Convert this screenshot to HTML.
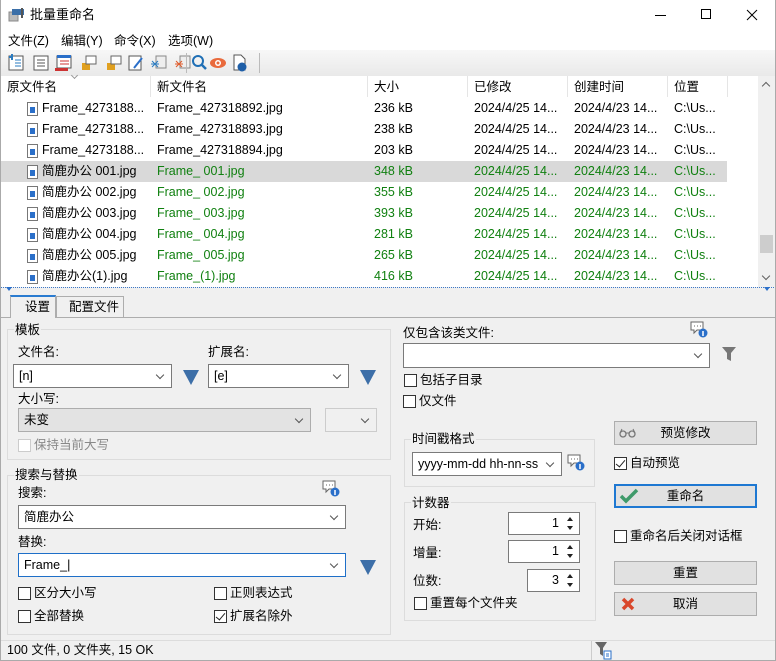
<!DOCTYPE html>
<html><head><meta charset="utf-8"><style>
*{box-sizing:border-box;margin:0;padding:0}
body{width:776px;height:661px;overflow:hidden;background:#f0f0f0;font-family:"Liberation Sans","Noto Sans CJK SC",sans-serif;font-size:12.5px;color:#000;position:relative}
.a{position:absolute;white-space:nowrap}
.t{position:absolute;white-space:nowrap;line-height:16px}
.combo{position:absolute;background:#fff;border:1px solid #7a7a7a;height:24px;padding:0 5px;line-height:22px}
.combo:after{content:"";position:absolute;right:8px;top:7px;width:5px;height:5px;border-right:1px solid #555;border-bottom:1px solid #555;transform:rotate(45deg)}
.tri{position:absolute;width:0;height:0;border-left:8px solid transparent;border-right:8px solid transparent;border-top:15px solid #3d6fa8}
.cb{position:absolute;width:13px;height:13px;border:1px solid #333;background:#fff}
.cb.chk:after{content:"";position:absolute;left:3px;top:0px;width:4px;height:8px;border-right:1.5px solid #222;border-bottom:1.5px solid #222;transform:rotate(40deg)}
.grp{position:absolute;border:1px solid #dcdcdc}
.btn{position:absolute;background:#e1e1e1;border:1px solid #adadad;height:24px;text-align:center;line-height:22px}
.spin{position:absolute;background:#fff;border:1px solid #7a7a7a;height:23px;text-align:right;padding-right:20px;line-height:21px}
.spin:before{content:"";position:absolute;right:6px;top:4px;border-left:3px solid transparent;border-right:3px solid transparent;border-bottom:4px solid #222}
.spin:after{content:"";position:absolute;right:6px;bottom:4px;border-left:3px solid transparent;border-right:3px solid transparent;border-top:4px solid #222}
.row{position:absolute;left:0;width:727px;height:21px;line-height:21px}
.row span{position:absolute;white-space:nowrap}
.g{color:#108010}
.fi{position:absolute;left:27px;top:4px;width:11px;height:14px;border:1px solid #777;background:#fff}
.fi:after{content:"";position:absolute;left:2px;top:4px;width:5px;height:6px;background:#2a6fc9}
.info{position:absolute;width:18px;height:18px}
</style></head><body>
<!-- title -->
<div class="a" style="left:0;top:0;width:776px;height:50px;background:#fff"></div>
<svg class="a" style="left:8px;top:8px" width="18" height="14"><rect x="1" y="4" width="9" height="9" fill="#bbb" stroke="#888"/><rect x="4" y="1" width="12" height="6" fill="#3b6fa8"/><rect x="13" y="0" width="2" height="10" fill="#555"/></svg>
<div class="t" style="left:30px;top:7px;font-size:13px">批量重命名</div>
<div class="a" style="left:655px;top:15px;width:11px;height:1px;background:#000"></div>
<div class="a" style="left:701px;top:9px;width:10px;height:10px;border:1px solid #000"></div>
<svg class="a" style="left:746px;top:9px" width="12" height="12"><path d="M1 1L11 11M11 1L1 11" stroke="#000" stroke-width="1"/></svg>
<!-- menu -->
<div class="t" style="left:8px;top:33px">文件(Z)</div>
<div class="t" style="left:61px;top:33px">编辑(Y)</div>
<div class="t" style="left:114px;top:33px">命令(X)</div>
<div class="t" style="left:168px;top:33px">选项(W)</div>
<!-- toolbar -->
<div class="a" style="left:0;top:50px;width:776px;height:26px;background:linear-gradient(#f7f7f7,#e9e9e9)"></div>
<svg class="a" style="left:6px;top:53px" width="260" height="20">
<g fill="none" stroke="#555"><rect x="3" y="3" width="14" height="14" fill="#fff"/><rect x="28" y="3" width="14" height="14" fill="#fff"/><rect x="51" y="3" width="14" height="12" fill="#fff"/></g>
<path d="M3 4h4M6 1v6" stroke="#2a7bc0" stroke-width="2"/><path d="M9 7h6M9 10h6M9 13h6" stroke="#2a7bc0"/>
<path d="M31 7h8M31 10h8M31 13h8" stroke="#555"/>
<rect x="51" y="2" width="14" height="3" fill="#2a6fc9"/><path d="M54 8h9M54 11h9" stroke="#c33"/><rect x="49" y="15" width="13" height="3" fill="#c33"/>
<rect x="76" y="10" width="8" height="7" fill="#e0a020"/><rect x="80" y="3" width="10" height="8" fill="#fff" stroke="#666"/>
<rect x="101" y="10" width="8" height="7" fill="#e0a020"/><rect x="105" y="3" width="10" height="8" fill="#fff" stroke="#666"/>
<rect x="123" y="3" width="12" height="14" fill="#fff" stroke="#555"/><path d="M128 15l8-10" stroke="#2a6fc9" stroke-width="2"/>
<rect x="150" y="3" width="10" height="12" fill="#eee" stroke="#888"/><path d="M146 14l6-6M146 8l6 6M145 11h8" stroke="#2a7bc0"/>
<rect x="174" y="3" width="10" height="12" fill="#eee" stroke="#888"/><path d="M170 14l6-6M170 8l6 6M169 11h8" stroke="#e05a2a"/>
<path d="M180.5 0v20" stroke="#bbb"/>
<circle cx="192" cy="8" r="5" fill="none" stroke="#1f6fb5" stroke-width="2"/><path d="M196 12l4 4" stroke="#1f6fb5" stroke-width="2.5"/>
<ellipse cx="212" cy="10" rx="8" ry="5" fill="#e96a3c"/><circle cx="212" cy="10" r="3" fill="#fff"/><circle cx="212" cy="10" r="1.5" fill="#e96a3c"/>
<path d="M228 2h7l4 4v11h-11z" fill="#fff" stroke="#555"/><circle cx="236" cy="14" r="4.5" fill="#1f5fa8"/>
<path d="M253.5 0v20" stroke="#bbb"/>
</svg>
<!-- list -->
<div class="a" style="left:0;top:76px;width:776px;height:211px;background:#fff"></div>
<div class="t" style="left:7px;top:79px">原文件名</div>
<div class="t" style="left:157px;top:79px">新文件名</div>
<div class="t" style="left:374px;top:79px">大小</div>
<div class="t" style="left:474px;top:79px">已修改</div>
<div class="t" style="left:574px;top:79px">创建时间</div>
<div class="t" style="left:674px;top:79px">位置</div>
<div class="a" style="left:150px;top:76px;width:1px;height:21px;background:#e5e5e5"></div>
<div class="a" style="left:367px;top:76px;width:1px;height:21px;background:#e5e5e5"></div>
<div class="a" style="left:467px;top:76px;width:1px;height:21px;background:#e5e5e5"></div>
<div class="a" style="left:567px;top:76px;width:1px;height:21px;background:#e5e5e5"></div>
<div class="a" style="left:667px;top:76px;width:1px;height:21px;background:#e5e5e5"></div>
<div class="a" style="left:727px;top:76px;width:1px;height:21px;background:#e5e5e5"></div>
<div class="a" style="left:72px;top:73px;width:5px;height:5px;border-right:1px solid #999;border-bottom:1px solid #999;transform:rotate(45deg)"></div>

<div class="row" style="top:98px"><i class="fi"></i><span style="left:42px">Frame_4273188...</span><span style="left:157px">Frame_427318892.jpg</span><span style="left:374px">236 kB</span><span style="left:474px">2024/4/25 14...</span><span style="left:574px">2024/4/23 14...</span><span style="left:674px">C:\Us...</span></div>
<div class="row" style="top:119px"><i class="fi"></i><span style="left:42px">Frame_4273188...</span><span style="left:157px">Frame_427318893.jpg</span><span style="left:374px">238 kB</span><span style="left:474px">2024/4/25 14...</span><span style="left:574px">2024/4/23 14...</span><span style="left:674px">C:\Us...</span></div>
<div class="row" style="top:140px"><i class="fi"></i><span style="left:42px">Frame_4273188...</span><span style="left:157px">Frame_427318894.jpg</span><span style="left:374px">203 kB</span><span style="left:474px">2024/4/25 14...</span><span style="left:574px">2024/4/23 14...</span><span style="left:674px">C:\Us...</span></div>
<div class="row" style="top:161px;background:#d9d9d9"><i class="fi"></i><span style="left:42px">简鹿办公 001.jpg</span><span class="g" style="left:157px">Frame_ 001.jpg</span><span class="g" style="left:374px">348 kB</span><span class="g" style="left:474px">2024/4/25 14...</span><span class="g" style="left:574px">2024/4/23 14...</span><span class="g" style="left:674px">C:\Us...</span></div>
<div class="row" style="top:182px"><i class="fi"></i><span style="left:42px">简鹿办公 002.jpg</span><span class="g" style="left:157px">Frame_ 002.jpg</span><span class="g" style="left:374px">355 kB</span><span class="g" style="left:474px">2024/4/25 14...</span><span class="g" style="left:574px">2024/4/23 14...</span><span class="g" style="left:674px">C:\Us...</span></div>
<div class="row" style="top:203px"><i class="fi"></i><span style="left:42px">简鹿办公 003.jpg</span><span class="g" style="left:157px">Frame_ 003.jpg</span><span class="g" style="left:374px">393 kB</span><span class="g" style="left:474px">2024/4/25 14...</span><span class="g" style="left:574px">2024/4/23 14...</span><span class="g" style="left:674px">C:\Us...</span></div>
<div class="row" style="top:224px"><i class="fi"></i><span style="left:42px">简鹿办公 004.jpg</span><span class="g" style="left:157px">Frame_ 004.jpg</span><span class="g" style="left:374px">281 kB</span><span class="g" style="left:474px">2024/4/25 14...</span><span class="g" style="left:574px">2024/4/23 14...</span><span class="g" style="left:674px">C:\Us...</span></div>
<div class="row" style="top:245px"><i class="fi"></i><span style="left:42px">简鹿办公 005.jpg</span><span class="g" style="left:157px">Frame_ 005.jpg</span><span class="g" style="left:374px">265 kB</span><span class="g" style="left:474px">2024/4/25 14...</span><span class="g" style="left:574px">2024/4/23 14...</span><span class="g" style="left:674px">C:\Us...</span></div>
<div class="row" style="top:266px"><i class="fi"></i><span style="left:42px">简鹿办公(1).jpg</span><span class="g" style="left:157px">Frame_(1).jpg</span><span class="g" style="left:374px">416 kB</span><span class="g" style="left:474px">2024/4/25 14...</span><span class="g" style="left:574px">2024/4/23 14...</span><span class="g" style="left:674px">C:\Us...</span></div>
<!-- scrollbar -->
<div class="a" style="left:758px;top:76px;width:17px;height:211px;background:#f0f0f0"></div>
<div class="a" style="left:760px;top:235px;width:13px;height:18px;background:#cdcdcd"></div>
<div class="a" style="left:763px;top:83px;width:6px;height:6px;border-left:1.5px solid #606060;border-top:1.5px solid #606060;transform:rotate(45deg)"></div>
<div class="a" style="left:763px;top:273px;width:6px;height:6px;border-right:1.5px solid #606060;border-bottom:1.5px solid #606060;transform:rotate(45deg)"></div>
<div class="a" style="left:0;top:287px;width:776px;height:3px;border-top:1px dotted #3c78c8;background:#f0f0f0"></div>
<div class="a" style="left:6px;top:287px;border-left:3px solid transparent;border-right:3px solid transparent;border-top:4px solid #2a6fc9"></div>
<div class="a" style="left:764px;top:287px;border-left:3px solid transparent;border-right:3px solid transparent;border-top:4px solid #2a6fc9"></div>
<!-- tabs -->
<div class="a" style="left:0;top:317px;width:776px;height:1px;background:#adadad"></div>
<div class="a" style="left:10px;top:295px;width:46px;height:23px;background:#f0f0f0;border:1px solid #adadad;border-bottom:none;border-top:2px solid #2a7bd0"></div>
<div class="t" style="left:25px;top:299px">设置</div>
<div class="a" style="left:56px;top:296px;width:68px;height:21px;border:1px solid #adadad;border-bottom:none;background:#f0f0f0"></div>
<div class="t" style="left:69px;top:299px">配置文件</div>
<!-- 模板 -->
<div class="grp" style="left:7px;top:329px;width:384px;height:131px"></div>
<div class="t" style="left:14px;top:322px;background:#f0f0f0;padding:0 1px">模板</div>
<div class="t" style="left:18px;top:344px">文件名:</div>
<div class="combo" style="left:13px;top:364px;width:159px">[n]</div>
<div class="tri" style="left:183px;top:370px"></div>
<div class="t" style="left:208px;top:344px">扩展名:</div>
<div class="combo" style="left:208px;top:364px;width:141px">[e]</div>
<div class="tri" style="left:360px;top:370px"></div>
<div class="t" style="left:18px;top:391px">大小写:</div>
<div class="combo" style="left:18px;top:408px;width:293px;background:#e3e3e3;border-color:#adadad">未变</div>
<div class="combo" style="left:325px;top:408px;width:52px;background:#f0f0f0;border-color:#ccc"></div>
<div class="cb" style="left:18px;top:439px;border-color:#ccc"></div>
<div class="t" style="left:34px;top:437px;color:#888">保持当前大写</div>
<!-- 搜索与替换 -->
<div class="grp" style="left:7px;top:475px;width:384px;height:160px"></div>
<div class="t" style="left:14px;top:467px;background:#f0f0f0;padding:0 1px">搜索与替换</div>
<svg class="info" style="left:322px;top:480px"><path d="M1 1h12v8h-6l-3 3v-3h-3z" fill="#fff" stroke="#666"/><path d="M4 5h1M7 5h1M10 5h1" stroke="#666"/><circle cx="13" cy="12" r="4.5" fill="#2a6fc9"/><path d="M13 10v5" stroke="#fff" stroke-width="1.5"/></svg>
<div class="t" style="left:18px;top:485px">搜索:</div>
<div class="combo" style="left:18px;top:505px;width:328px">简鹿办公</div>
<div class="t" style="left:18px;top:534px">替换:</div>
<div class="combo" style="left:18px;top:553px;width:328px;border-color:#1e6fc8">Frame_|</div>
<div class="tri" style="left:360px;top:560px"></div>
<div class="cb" style="left:18px;top:587px"></div><div class="t" style="left:34px;top:585px">区分大小写</div>
<div class="cb" style="left:214px;top:587px"></div><div class="t" style="left:230px;top:585px">正则表达式</div>
<div class="cb" style="left:18px;top:610px"></div><div class="t" style="left:34px;top:608px">全部替换</div>
<div class="cb chk" style="left:214px;top:610px"></div><div class="t" style="left:230px;top:608px">扩展名除外</div>
<!-- right -->
<div class="grp" style="left:386px;top:329px;width:5px;height:131px;border-left:none"></div>
<div class="t" style="left:403px;top:325px">仅包含该类文件:</div>
<svg class="info" style="left:690px;top:321px"><path d="M1 1h12v8h-6l-3 3v-3h-3z" fill="#fff" stroke="#666"/><path d="M4 5h1M7 5h1M10 5h1" stroke="#666"/><circle cx="13" cy="12" r="4.5" fill="#2a6fc9"/><path d="M13 10v5" stroke="#fff" stroke-width="1.5"/></svg>
<div class="combo" style="left:403px;top:343px;width:307px;height:25px"></div>
<svg class="a" style="left:721px;top:346px" width="16" height="16"><path d="M1 1h14l-5 6v8l-4-2v-6z" fill="#777"/></svg>
<div class="cb" style="left:404px;top:374px"></div><div class="t" style="left:420px;top:372px">包括子目录</div>
<div class="cb" style="left:403px;top:395px"></div><div class="t" style="left:419px;top:393px">仅文件</div>
<div class="grp" style="left:404px;top:439px;width:191px;height:48px"></div>
<div class="t" style="left:411px;top:431px;background:#f0f0f0;padding:0 1px">时间戳格式</div>
<div class="combo" style="left:412px;top:452px;width:150px">yyyy-mm-dd hh-nn-ss</div>
<svg class="info" style="left:567px;top:454px"><path d="M1 1h12v8h-6l-3 3v-3h-3z" fill="#fff" stroke="#666"/><path d="M4 5h1M7 5h1M10 5h1" stroke="#666"/><circle cx="13" cy="12" r="4.5" fill="#2a6fc9"/><path d="M13 10v5" stroke="#fff" stroke-width="1.5"/></svg>
<div class="grp" style="left:404px;top:502px;width:192px;height:119px"></div>
<div class="t" style="left:411px;top:495px;background:#f0f0f0;padding:0 1px">计数器</div>
<div class="t" style="left:413px;top:517px">开始:</div><div class="spin" style="left:508px;top:512px;width:72px">1</div>
<div class="t" style="left:413px;top:545px">增量:</div><div class="spin" style="left:508px;top:540px;width:72px">1</div>
<div class="t" style="left:413px;top:573px">位数:</div><div class="spin" style="left:527px;top:569px;width:53px">3</div>
<div class="cb" style="left:414px;top:597px"></div><div class="t" style="left:430px;top:595px">重置每个文件夹</div>
<div class="btn" style="left:614px;top:421px;width:143px">预览修改</div>
<svg class="a" style="left:619px;top:428px" width="18" height="10"><circle cx="4" cy="6" r="3" fill="none" stroke="#777" stroke-width="1.3"/><circle cx="13" cy="6" r="3" fill="none" stroke="#777" stroke-width="1.3"/><path d="M7 5h3M1 5l2-4M16 5l-2-4" stroke="#777"/></svg>
<div class="cb chk" style="left:614px;top:457px"></div><div class="t" style="left:630px;top:455px">自动预览</div>
<div class="btn" style="left:614px;top:484px;width:143px;border:2px solid #1e78d2;line-height:20px">重命名</div>
<svg class="a" style="left:619px;top:488px" width="20" height="16"><path d="M2 8l5 5 11-11" fill="none" stroke="#3f9a6a" stroke-width="3.5"/></svg>
<div class="cb" style="left:614px;top:530px"></div><div class="t" style="left:630px;top:528px">重命名后关闭对话框</div>
<div class="btn" style="left:614px;top:561px;width:143px">重置</div>
<div class="btn" style="left:614px;top:592px;width:143px">取消</div>
<svg class="a" style="left:621px;top:597px" width="14" height="14"><path d="M2 2l10 10M12 2l-10 10" stroke="#d9472b" stroke-width="3.5"/></svg>
<!-- status -->
<div class="a" style="left:0;top:640px;width:776px;height:1px;background:#dcdcdc"></div>
<div class="t" style="left:7px;top:642px">100 文件, 0 文件夹, 15 OK</div>
<div class="a" style="left:591px;top:641px;width:1px;height:20px;background:#ccc"></div>
<svg class="a" style="left:595px;top:641px" width="18" height="20"><path d="M0 1h12l-4 6v8l-3-2v-6z" fill="#666"/><rect x="9" y="10" width="7" height="8" fill="#fff" stroke="#2a6fc9"/><path d="M11 13h3M11 15h3" stroke="#2a6fc9"/></svg>
<div class="a" style="left:0;top:0;width:776px;height:661px;border:1px solid #aaa;border-top:none;pointer-events:none"></div>
</body></html>
